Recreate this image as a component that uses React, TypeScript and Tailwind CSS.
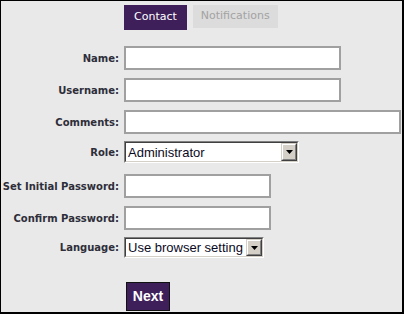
import React from "react";

const labelCls =
  "w-[119px] shrink-0 pr-[1px] text-right font-bold text-[10px] text-[#2e2e3a] whitespace-nowrap flex items-center justify-end";
const labelFont = { fontFamily: '"DejaVu Sans", Verdana, sans-serif' } as React.CSSProperties;

function InputRow({ label, width }: { label: string; width: number }) {
  return (
    <div className="flex h-[32px] pt-[4px]">
      <div className={labelCls + " h-[24px]"} style={labelFont}>
        {label}
      </div>
      <input
        type="text"
        className="ml-[4px] h-[24px] border-2 border-[#a0a0a0] bg-white outline-none"
        style={{ width }}
      />
    </div>
  );
}

function FakeSelect({ value, width, height }: { value: string; width: number; height: number }) {
  return (
    <div
      className="ml-[4px] border border-t-[#808080] border-l-[#808080] border-b-white border-r-white"
      style={{ width, height }}
    >
      <div className="flex h-full w-full items-stretch border border-t-[#404040] border-l-[#404040] border-b-[#d4d0c8] border-r-[#d4d0c8] bg-white">
        <div
          className="flex flex-1 items-center overflow-hidden whitespace-nowrap pl-[2px] text-[13px] leading-none text-[#0a0a1e]"
          style={{ fontFamily: '"Liberation Sans", Arial, sans-serif' }}
        >
          {value}
        </div>
        <div className="flex w-[16px] items-center justify-center border border-t-[#d4d0c8] border-l-[#d4d0c8] border-b-[#404040] border-r-[#404040] bg-[#d4d0c8]">
          <div className="flex h-full w-full items-center justify-center border border-t-white border-l-white border-b-[#808080] border-r-[#808080]">
            <svg width="7" height="4" viewBox="0 0 7 4">
              <path d="M0 0h7L3.5 4z" fill="#000" />
            </svg>
          </div>
        </div>
      </div>
    </div>
  );
}

function SelectRow({ label, value, width, height, top }: { label: string; value: string; width: number; height: number; top: number }) {
  return (
    <div className="flex h-[32px]" style={{ paddingTop: top }}>
      <div className={labelCls} style={{ ...labelFont, height }}>
        {label}
      </div>
      <FakeSelect value={value} width={width} height={height} />
    </div>
  );
}

export default function App() {
  return (
    <div className="box-border h-[314px] w-[404px] overflow-hidden border-t border-l border-r-2 border-b-2 border-black bg-[#e9e9e9]">
      <div className="ml-[123px] mt-[4px] flex items-start gap-[6px]" style={labelFont}>
        <div className="flex h-[25px] items-center bg-[#3f1f5a] px-[10px] text-[11px] text-white">Contact</div>
        <div className="flex h-[23px] items-center bg-[#dcdcdc] px-[8px] text-[11px] text-[#a3a3a3]">Notifications</div>
      </div>
      <div className="mt-[12px]">
        <InputRow label="Name:" width={217} />
        <InputRow label="Username:" width={217} />
        <InputRow label="Comments:" width={277} />
        <SelectRow label="Role:" value="Administrator" width={175} height={22} top={3} />
        <InputRow label="Set Initial Password:" width={147} />
        <InputRow label="Confirm Password:" width={147} />
        <SelectRow label="Language:" value="Use browser setting" width={140} height={21} top={3} />
      </div>
      <button
        className="ml-[125px] mt-[16px] flex h-[29px] w-[44px] items-center justify-center border border-[#111] bg-[#3f1f5a] text-[14px] font-bold text-white"
        style={{ fontFamily: '"Liberation Sans", Arial, sans-serif' }}
      >
        Next
      </button>
    </div>
  );
}
